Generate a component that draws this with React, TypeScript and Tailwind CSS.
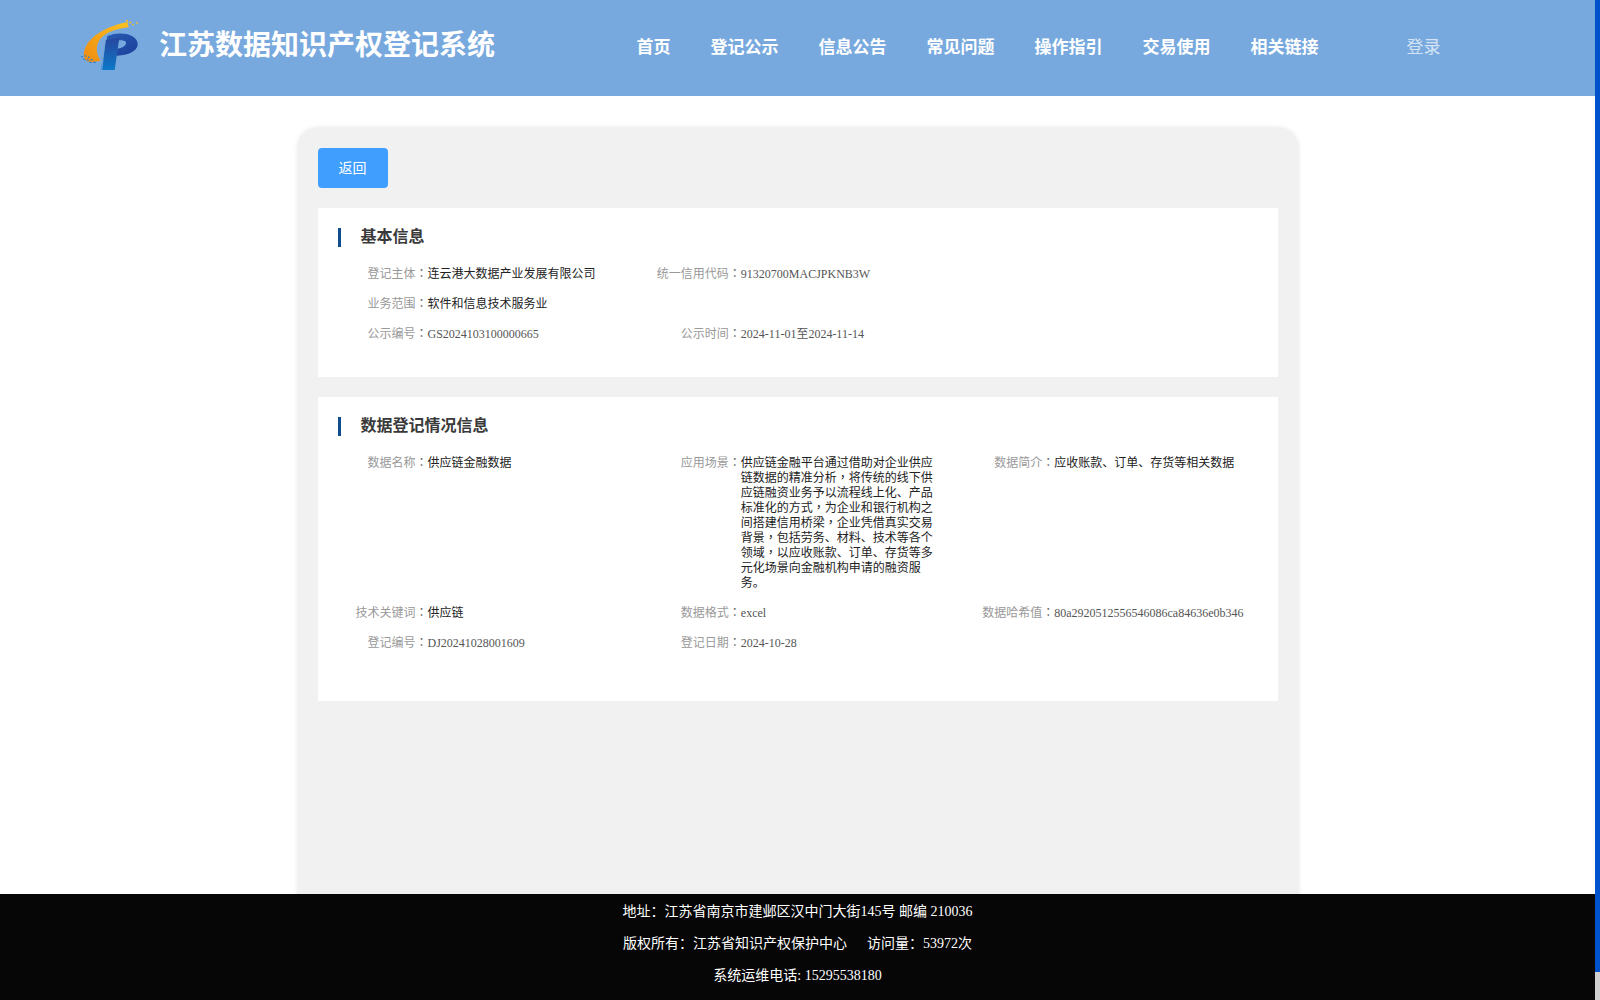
import React from "react";

const font = { fontFamily: '"Liberation Serif", "Noto Sans CJK SC", serif' };

function Logo() {
  return (
    <svg width="80" height="70" viewBox="0 0 240 210" className="shrink-0">
      <defs>
        <linearGradient id="sw" x1="0" y1="1" x2="1" y2="0">
          <stop offset="0" stopColor="#ef8a12" />
          <stop offset="1" stopColor="#f9c31f" />
        </linearGradient>
        <linearGradient id="pb" x1="0" y1="0" x2="1" y2="1">
          <stop offset="0" stopColor="#2a5cb4" />
          <stop offset="1" stopColor="#1a3f9a" />
        </linearGradient>
        <linearGradient id="st" x1="0" y1="0" x2="0" y2="1">
          <stop offset="0" stopColor="#27479f" />
          <stop offset="1" stopColor="#0d78c8" />
        </linearGradient>
      </defs>
      <path d="M42 140C38 100 80 56 172 36L176 52C140 56 108 66 90 88C78 104 76 130 92 152L66 157C50 155 43 150 42 140Z" fill="url(#sw)" />
      <path d="M112 78C136 68 168 68 186 78C208 90 208 112 190 124C176 134 156 138 136 137L140 116C152 116 166 110 168 100C170 90 150 86 108 98Z" fill="url(#pb)" />
      <path d="M108 90L148 84L134 180L92 180Z" fill="url(#st)" />
      <path d="M103 100L106 100L97 179L93 179Z" fill="#6ea3da" />
      <g fill="#f3bd2a">
        <rect x="168" y="30" width="6" height="5" />
        <rect x="178" y="35" width="6" height="5" />
        <rect x="198" y="37" width="6" height="4" />
        <rect x="186" y="42" width="5" height="4" />
      </g>
      <g fill="#2a7fcc">
        <rect x="34" y="138" width="5" height="4" />
        <rect x="44" y="136" width="5" height="4" />
        <rect x="54" y="140" width="5" height="4" />
        <rect x="40" y="146" width="5" height="4" />
        <rect x="50" y="148" width="6" height="4" />
        <rect x="62" y="147" width="6" height="4" />
        <rect x="58" y="155" width="6" height="4" />
        <rect x="70" y="155" width="7" height="4" />
      </g>
    </svg>
  );
}

function Field({ label, children }: { label: string; children?: React.ReactNode }) {
  return (
    <div className="flex py-[7.5px] text-[12px] leading-[15px]">
      <div className="w-[90px] shrink-0 text-right text-[#999999] whitespace-nowrap">
        {label}
        <span className="text-[#666666] leading-[0] font-['Noto_Sans_CJK_TC']">：</span>
      </div>
      <div className="w-[200px] text-[#555555] break-all">{children}</div>
    </div>
  );
}

function Title({ children }: { children: React.ReactNode }) {
  return (
    <div className="flex items-center h-[19px] border-l-[3px] border-[#0f4d8f] pl-[20px] text-[16px] leading-[18px] font-bold text-[#3a3a3a] mb-[12.5px]">
      <span className="-mt-[1px]">{children}</span>
    </div>
  );
}

const Comma = () => <span className="leading-[0] font-['Noto_Sans_CJK_TC']">，</span>;

const nav = ["首页", "登记公示", "信息公告", "常见问题", "操作指引", "交易使用", "相关链接"];

export default function App() {
  return (
    <div className="flex h-screen overflow-hidden bg-white" style={font}>
      <div className="flex-1 min-w-0 flex flex-col">
        <header className="h-[96px] shrink-0 bg-[#78a9de] flex items-start pl-[70px] pt-[10px]">
          <Logo />
          <div className="ml-[9px] mt-[15px] text-[28px] leading-[42px] font-bold text-white whitespace-nowrap w-[477.5px]">
            江苏数据知识产权登记系统
          </div>
          <nav className="flex gap-[40px] mt-[26px] text-[17px] leading-[24px] font-bold text-white whitespace-nowrap">
            {nav.map((n) => (
              <span key={n}>{n}</span>
            ))}
          </nav>
          <div className="ml-[88px] mt-[26px] text-[17px] leading-[24px] text-white/70">登录</div>
        </header>

        <main className="flex-1 min-h-0 overflow-hidden flex justify-center pt-[32px]">
          <div className="w-[1000px] h-[800px] shrink-0 bg-[#f1f1f1] rounded-[20px] shadow-[0_0_5px_rgba(0,0,0,0.12)] p-[20px] flex flex-col gap-[20px]">
            <button className="w-[70px] h-[40px] bg-[#409eff] rounded-[4px] text-white text-[14px]">返回</button>

            <section className="bg-white h-[169px] pt-[20px] pl-[20px]">
              <Title>基本信息</Title>
              <div className="grid grid-cols-3">
                <Field label="登记主体">
                  <span className="whitespace-nowrap text-[#222222]">连云港大数据产业发展有限公司</span>
                </Field>
                <Field label="统一信用代码">91320700MACJPKNB3W</Field>
                <div />
                <Field label="业务范围">
                  <span className="text-[#222222]">软件和信息技术服务业</span>
                </Field>
                <div />
                <div />
                <Field label="公示编号">GS2024103100000665</Field>
                <Field label="公示时间">2024-11-01至2024-11-14</Field>
                <div />
              </div>
            </section>

            <section className="bg-white h-[304px] pt-[20px] pl-[20px]">
              <Title>数据登记情况信息</Title>
              <div className="grid grid-cols-3">
                <Field label="数据名称">
                  <span className="text-[#222222]">供应链金融数据</span>
                </Field>
                <Field label="应用场景">
                  <span className="text-[#222222]">
                    供应链金融平台通过借助对企业供应链数据的精准分析
                    <Comma />
                    将传统的线下供应链融资业务予以流程线上化、产品标准化的方式
                    <Comma />
                    为企业和银行机构之间搭建信用桥梁
                    <Comma />
                    企业凭借真实交易背景
                    <Comma />
                    包括劳务、材料、技术等各个领域
                    <Comma />
                    以应收账款、订单、存货等多元化场景向金融机构申请的融资服务。
                  </span>
                </Field>
                <Field label="数据简介">
                  <span className="whitespace-nowrap text-[#222222]">应收账款、订单、存货等相关数据</span>
                </Field>
                <Field label="技术关键词">
                  <span className="text-[#222222]">供应链</span>
                </Field>
                <Field label="数据格式">excel</Field>
                <Field label="数据哈希值">80a2920512556546086ca84636e0b346</Field>
                <Field label="登记编号">DJ20241028001609</Field>
                <Field label="登记日期">2024-10-28</Field>
                <div />
              </div>
            </section>
          </div>
        </main>

        <footer className="h-[106px] shrink-0 bg-[#060606] pt-[2px] text-center text-[14px] leading-[32px] text-white">
          <div>地址：江苏省南京市建邺区汉中门大街145号 邮编 210036</div>
          <div>
            版权所有：江苏省知识产权保护中心<span className="ml-[20px]">访问量：53972次</span>
          </div>
          <div>系统运维电话: 15295538180</div>
        </footer>
      </div>
      <div className="w-[5px] shrink-0 flex flex-col">
        <div className="h-[972px] bg-[#0052cc]" />
        <div className="flex-1 bg-[#d0d0d0]" />
      </div>
    </div>
  );
}
